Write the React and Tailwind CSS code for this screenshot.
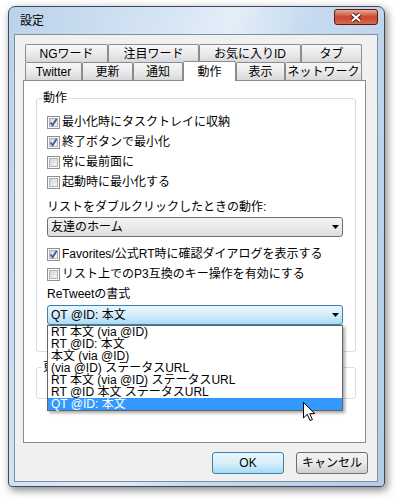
import React, { useId } from 'react';

const row1 = [
  { label: 'NGワード', w: 'w-[83px]' },
  { label: '注目ワード', w: 'w-[91px]' },
  { label: 'お気に入りID', w: 'w-[102px]' },
  { label: 'タブ', w: 'w-[61px]' },
];

const row2 = [
  { label: 'Twitter', w: 'w-[57px]' },
  { label: '更新', w: 'w-[51px]' },
  { label: '通知', w: 'w-[50px]' },
  { label: '動作', w: 'w-[53px]', active: true },
  { label: '表示', w: 'w-[49px]' },
  { label: 'ネットワーク', w: 'w-[77px]' },
];

const rtFormats = [
  'RT 本文 (via @ID)',
  'RT @ID: 本文',
  '本文 (via @ID)',
  '(via @ID) ステータスURL',
  'RT 本文 (via @ID) ステータスURL',
  'RT @ID 本文 ステータスURL',
  'QT @ID: 本文',
];

const CheckBox = ({ checked }) => {
  const id = useId();
  return (
    <svg width="13" height="13" viewBox="0 0 13 13" className="shrink-0">
      <defs>
        <linearGradient id={id} x1="0" y1="0" x2="1" y2="1">
          <stop offset="0" stopColor="#cfd3d8" />
          <stop offset="1" stopColor="#f8f8f8" />
        </linearGradient>
      </defs>
      <rect x="0.5" y="0.5" width="12" height="12" fill="#fdfdfd" stroke="#8e8f8f" />
      <rect x="2.5" y="2.5" width="8" height="8" fill={`url(#${id})`} stroke="#aeb3b9" />
      {checked && (
        <path d="M3.6 6.4 L5.6 9.2 L9.6 3" fill="none" stroke="#3b5499" strokeWidth="1.7" />
      )}
    </svg>
  );
};

const Arrow = () => (
  <svg width="7" height="4" viewBox="0 0 7 4">
    <path d="M0 0 H7 L3.5 4 Z" fill="#000" />
  </svg>
);

const Option = ({ checked, children }) => (
  <div className="h-[20px] flex items-center gap-[2px]">
    <CheckBox checked={checked} />
    <span className="leading-[14px]">{children}</span>
  </div>
);

export default function App() {
  return (
    <div className="relative w-[396px] h-[499px] overflow-hidden bg-white text-[12px] text-black font-['Liberation_Sans','Noto_Sans_CJK_JP',sans-serif]">
      {/* window frame */}
      <div className="ml-[8px] mt-[6px] w-[377px] h-[481px] flex flex-col border border-[#3d4b5c] rounded-t-[7px] rounded-b-[4px] pl-[5px] pr-[6px] pb-[4px] shadow-[2px_3px_8px_rgba(0,0,0,0.5)] bg-[linear-gradient(105deg,#bad2ea_0%,#d9e7f5_35%,#e4eef8_45%,#c6dbef_60%,#b3cde7_100%)]">
        <div className="h-[27px] flex justify-between">
          <div className="pl-[6px] flex items-center leading-none">設定</div>
          <div className="mt-[2px] w-[44px] h-[16px] rounded-[3px] border border-[#5e1a10] flex items-center justify-center bg-gradient-to-b from-[#e9a797] via-[#c8452f] to-[#d86b4d]">
            <svg width="14" height="11" viewBox="0 0 14 11">
              <path d="M3 2 L11 9 M11 2 L3 9" stroke="#4a1a12" strokeWidth="4" />
              <path d="M3 2 L11 9 M11 2 L3 9" stroke="#fff" strokeWidth="2.2" />
            </svg>
          </div>
        </div>

        {/* client area */}
        <div className="flex-1 flex flex-col bg-[#f0f0f0] border border-[#7f90a2] pl-[8px] pt-[9px] pb-[7px]">
          <div className="w-[343px] flex flex-col">
            <div className="ml-[2px] flex h-[18px]">
              {row1.map((t) => (
                <div
                  key={t.label}
                  className={`${t.w} h-[18px] flex items-center justify-center border border-b-0 border-[#898c95] rounded-t-[2px] bg-gradient-to-b from-[#f7f7f7] via-[#ebebeb] to-[#d8d8d8] leading-none`}
                >
                  {t.label}
                </div>
              ))}
            </div>
            <div className="ml-[2px] flex items-end h-[18px]">
              {row2.map((t) =>
                t.active ? (
                  <div
                    key={t.label}
                    className={`${t.w} relative z-10 h-[20px] -mb-px flex items-center justify-center border border-b-0 border-[#898c95] rounded-t-[2px] bg-white leading-none`}
                  >
                    {t.label}
                  </div>
                ) : (
                  <div
                    key={t.label}
                    className={`${t.w} h-[18px] flex items-center justify-center border border-b-0 border-[#898c95] rounded-t-[2px] bg-gradient-to-b from-[#f7f7f7] via-[#ebebeb] to-[#d8d8d8] leading-none`}
                  >
                    {t.label}
                  </div>
                )
              )}
            </div>

            {/* tab page */}
            <div className="relative h-[363px] border border-[#898c95] bg-white pl-[12px] pt-[17px]">
              <div className="relative w-[320px] h-[254px] border border-[#d5dfe5] rounded-[3px] pl-[10px] pt-[13px]">
                <div className="absolute left-[5px] -top-[8px] bg-white px-[1px] leading-[14px]">動作</div>
                <Option checked>最小化時にタスクトレイに収納</Option>
                <Option checked>終了ボタンで最小化</Option>
                <Option>常に最前面に</Option>
                <Option>起動時に最小化する</Option>
                <div className="mt-[8px] h-[14px] leading-[14px]">リストをダブルクリックしたときの動作:</div>
                <div className="mt-[3px] w-[296px] h-[20px] flex items-center justify-between pl-[3px] pr-[3px] border border-[#707070] rounded-[3px] bg-gradient-to-b from-[#f4f4f4] via-[#ebebeb] to-[#dcdcdc]">
                  <span className="leading-none">友達のホーム</span>
                  <Arrow />
                </div>
                <div className="mt-[7px]">
                  <Option checked>Favorites/公式RT時に確認ダイアログを表示する</Option>
                  <Option>リスト上でのP3互換のキー操作を有効にする</Option>
                </div>
                <div className="mt-[3px] h-[14px] leading-[14px]">ReTweetの書式</div>
                <div className="mt-[4px] w-[296px] h-[20px] flex items-center justify-between pl-[3px] pr-[3px] border border-[#3c7fb1] rounded-[3px] bg-gradient-to-b from-[#eaf6fd] via-[#d3edfb] to-[#a9dbf6]">
                  <span className="leading-none">QT @ID: 本文</span>
                  <Arrow />
                </div>
              </div>

              <div className="relative mt-[15px] w-[320px] h-[32px] border border-[#d5dfe5] rounded-[3px]">
                <div className="absolute left-[5px] -top-[8px] bg-white px-[1px] leading-[14px]">更新</div>
              </div>

              {/* open drop-down list */}
              <div className="absolute left-[23px] top-[244px] z-20 w-[296px] h-[86px] border border-[#646464] bg-white shadow-[2px_2px_3px_rgba(0,0,0,0.35)]">
                {rtFormats.map((f, i) => (
                  <div
                    key={f}
                    className={`h-[12px] leading-[12px] pl-[3px] whitespace-nowrap ${
                      i === rtFormats.length - 1 ? 'bg-[#3399ff] text-white' : ''
                    }`}
                  >
                    {f}
                  </div>
                ))}
              </div>
            </div>
          </div>

          <div className="mt-[9px] pr-[9px] flex justify-end gap-[12px]">
            <div className="w-[72px] h-[22px] flex items-center justify-center border border-[#3c7fb1] rounded-[3px] bg-gradient-to-b from-[#eaf6fd] via-[#d9f0fc] to-[#a7d9f5] leading-none">
              OK
            </div>
            <div className="w-[72px] h-[22px] flex items-center justify-center border border-[#707070] rounded-[3px] bg-gradient-to-b from-[#f2f2f2] via-[#ebebeb] to-[#cfcfcf] leading-none">
              キャンセル
            </div>
          </div>
        </div>
      </div>

      {/* mouse pointer */}
      <svg className="absolute left-[303px] top-[402px] z-30" width="13" height="20" viewBox="0 0 13 20">
        <path d="M0.5 0.5 V16 L4.3 12.3 L7 18.6 L9.4 17.6 L6.8 11.6 H11.8 Z" fill="#fff" stroke="#000" strokeWidth="1" />
      </svg>
    </div>
  );
}
